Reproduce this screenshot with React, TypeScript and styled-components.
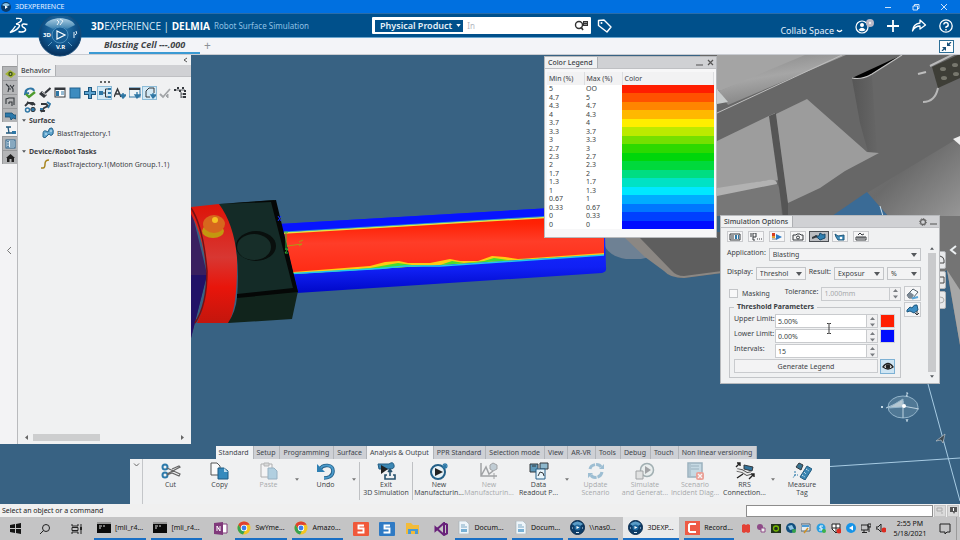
import React from "react";
import styled, { createGlobalStyle, css } from "styled-components";

const GlobalStyle = createGlobalStyle`
  *, *::before, *::after { box-sizing: border-box; }
  html, body { margin: 0; padding: 0; }
  body { font-family: "Noto Sans", "Open Sans", sans-serif; font-size: 7px; line-height: 9px; color: #3b3f45; }
  button, input, select { font: inherit; color: inherit; margin: 0; padding: 0; }
  button { background: none; border: 0; display: inline-flex; align-items: center; justify-content: center; }
  svg { display: block; flex: none; }
`;

const Shell = styled.div`
  min-height: 100vh;
  display: flex;
  flex-direction: column;
  overflow: hidden;
`;

const TitleBar = styled.header`
  height: 14px;
  display: flex;
  align-items: center;
  gap: 4px;
  padding: 0 12px 0 1px;
  background: #0070e0;
  color: #e8f2ff;
  border-bottom: 1px solid #2a6ca8;
`;

const WindowButtons = styled.div`
  margin-left: auto;
  display: flex;
  gap: 20px;
`;

const Header = styled.div`
  height: 23px;
  display: grid;
  grid-template-columns: 372fr 588fr;
  background: #00508b;
  color: #fff;
`;

const Brand = styled.div`
  display: flex;
  align-items: center;
  padding-left: 9px;
`;

const CompassSlot = styled.div`
  width: 44px;
  height: 20px;
  margin: 0 9px 0 10px;
  position: relative;
  z-index: 3;
  svg { position: absolute; left: 0; top: 0; }
`;

const BrandText = styled.h1`
  margin: 0;
  font: 400 10px/14px "Open Sans", sans-serif;
  color: #d8e8f6;
  white-space: nowrap;
  b { color: #fff; }
`;

const AppName = styled.span`
  margin-left: 4px;
  font-size: 8px;
  line-height: 14px;
  color: #8fc0e4;
  white-space: nowrap;
`;

const HeaderRight = styled.div`
  display: flex;
  align-items: center;
  padding-right: 7px;
`;

const SearchBox = styled.form`
  width: 219px;
  height: 17px;
  padding: 3px;
  display: flex;
  align-items: center;
  gap: 4px;
  background: #fff;
  border-radius: 1px;
  input { flex: 1; min-width: 0; border: 0; outline: 0; font-size: 8px; }
  input::placeholder { color: #b3b8bf; opacity: 1; }
`;

const ScopeButton = styled.button`
  && { height: 12px; padding: 0 2px 0 5px; gap: 4px; background: #00508b; color: #e6f0f8; font-weight: 600; font-size: 9px; line-height: 12px; white-space: nowrap; }
`;

const TagButton = styled.button`
  && { margin-left: 6px; }
`;

const HeaderActions = styled.div`
  margin-left: auto;
  display: flex;
  align-items: center;
  gap: 12px;
`;

const SpaceButton = styled.button`
  && { align-self: flex-end; margin-bottom: -3px; gap: 2px; font-size: 9px; line-height: 12px; color: #e2eefa; white-space: nowrap; }
`;

const TabStrip = styled.nav`
  height: 18px;
  display: flex;
  align-items: center;
  padding: 0 6px 0 89px;
  background: #f3f4f8;
  border-top: 1px solid #6aa6cf;
  border-bottom: 1px solid #c9ccd2;
`;

const DocumentTab = styled.button`
  && { align-self: stretch; width: 111px; border-bottom: 2px solid #3b9ad3; font: italic 700 9px/14px "Open Sans", sans-serif; color: #404347; }
`;

const AddTab = styled.button`
  && { width: 15px; font-size: 12px; line-height: 14px; color: #8b9096; }
`;

const ExitFull = styled.button`
  && { margin-left: auto; width: 15px; height: 13px; border: 1px solid #2d6f97; background: #fff; }
`;

const Workspace = styled.main`
  position: relative;
  flex: 1;
  min-height: 449px;
  overflow: hidden;
  background: #386283;
`;

const Scene = styled.svg`
  position: absolute;
  inset: 0;
  width: 100%;
  height: 100%;
`;

const LeftDock = styled.aside`
  position: absolute;
  left: 0;
  top: 0;
  bottom: 60px;
  width: 191px;
  display: flex;
  background: #f0f1f2;
`;

const Gutter = styled.div`
  width: 18px;
  padding-top: 11px;
  display: flex;
  flex-direction: column;
  align-items: flex-end;
  background: #f3f3f5;
  border-right: 1px solid #b9babd;
`;

const GutterButton = styled.button<{ $active?: boolean }>`
  && { width: 15px; height: 14px; background: ${(p) => (p.$active ? "#f5f5f6" : "#b4b5b7")}; border: 1px solid ${(p) => (p.$active ? "#f5f5f6" : "#98999b")}; border-right: 0; border-bottom: 0; }
`;

const DockHandle = styled.button`
  && { margin-top: 79px; width: 17px; height: 14px; }
`;

const DockBody = styled.div`
  flex: 1;
  min-width: 0;
  display: flex;
  flex-direction: column;
`;

const CollapseRow = styled.div`
  height: 10px;
  display: flex;
  justify-content: flex-end;
  padding-right: 3px;
`;

const WindowBar = styled.div`
  height: 12px;
  display: flex;
  align-items: center;
  background: #d0d1d4;
  border-bottom: 1px solid #bfc0c3;
`;

const WindowTab = styled.h2`
  margin: 0 auto 0 0;
  align-self: stretch;
  display: flex;
  align-items: center;
  padding: 0 4px 0 3px;
  background: #f0f1f2;
  border-right: 1px solid #aeb0b3;
  font-size: 7px;
  font-weight: 500;
  white-space: nowrap;
`;

const WindowTool = styled.button`
  && { width: 11px; height: 11px; }
`;

const Dots = styled.div`
  height: 6px;
  display: flex;
  align-items: flex-end;
  justify-content: center;
  gap: 2px;
  margin-bottom: 3px;
  span { width: 2px; height: 2px; background: #333; border-radius: 1px; }
`;

const IconGrid = styled.div`
  display: grid;
  grid-template-columns: repeat(11, 15px);
  grid-auto-rows: 14px;
  padding: 0 4px;
`;

const IconCell = styled.button<{ $on?: boolean }>`
  && {
    ${(p) => p.$on && css`background: #d3e9f5; border: 1px solid #8dbcd8;`}
  }
`;

const Tree = styled.div`
  padding: 0 4px;
  flex: 1;
`;

const TreeGroup = styled.h3`
  margin: 0;
  height: 13px;
  display: flex;
  align-items: center;
  gap: 3px;
  font-size: 7px;
  font-weight: 700;
  color: #3f4246;
`;

const TreeItem = styled.div<{ $inset: number }>`
  height: 12px;
  margin-bottom: 6px;
  padding-left: ${(p) => p.$inset}px;
  display: flex;
  align-items: center;
  gap: 3px;
  white-space: nowrap;
`;

const HorizontalScroll = styled.div`
  height: 13px;
  padding: 0 6px 0 7px;
  display: flex;
  align-items: center;
  gap: 4px;
  span { width: 67px; height: 7px; background: #cdcecf; margin-right: auto; }
`;

const Floating = styled.section<{ $right: number; $top: number; $width: number }>`
  position: absolute;
  right: ${(p) => p.$right}px;
  top: ${(p) => p.$top}px;
  width: ${(p) => p.$width}px;
  background: #f0f1f2;
  border: 1px solid #b7b9bc;
`;

const LegendBody = styled.div`
  padding: 3px 2px 8px;
  background: #f7f7f8;
`;

const LegendTable = styled.table`
  width: 100%;
  height: 157px;
  table-layout: fixed;
  border-collapse: collapse;
  background: #fff;
  th { height: 13px; padding: 0 2px; text-align: left; font-weight: 400; background: #f2f2f3; border-right: 1px solid #dcdde0; line-height: 10px; }
  td { padding: 0 2px; font-size: 7px; line-height: 8px; }
  td:nth-child(3) { padding: 0; }
`;

const ColorCell = styled.td<{ $color: string }>`
  background: ${(p) => p.$color};
`;

const SimBody = styled.div`
  display: flex;
  padding: 3px 2px 5px 6px;
`;

const SimForm = styled.form`
  flex: 1;
  min-width: 0;
  display: flex;
  flex-direction: column;
`;

const ModeBar = styled.div`
  display: flex;
  gap: 5px;
  height: 12px;
  margin-bottom: 5px;
`;

const ModeButton = styled.button<{ $on?: boolean }>`
  && { width: ${(p) => (p.$on ? 20 : 16)}px; margin: ${(p) => (p.$on ? "0 -2px" : "0")}; height: 11px; border: 1px solid ${(p) => (p.$on ? "#4c4f54" : "#c9cacd")}; background: ${(p) => (p.$on ? "#bcbec2" : "#f6f6f7")}; }
`;

const FieldRow = styled.div<{ $gap?: number }>`
  display: flex;
  align-items: center;
  gap: 3px;
  margin-bottom: ${(p) => p.$gap || 0}px;
  label { white-space: nowrap; margin-bottom: 4px; }
`;

const SelectWrap = styled.span<{ $w?: number }>`
  position: relative;
  ${(p) => (p.$w ? `width: ${p.$w}px;` : "flex: 1;")}
  select {
    appearance: none;
    width: 100%;
    height: 13px;
    padding: 0 0 0 3px;
    background: #f3f3f4;
    border: 1px solid #c3c5c8;
    border-radius: 0;
    display: block;
  }
  svg { position: absolute; right: 4px; top: 5px; pointer-events: none; }
`;

const CheckLabel = styled.label`
  && { display: flex; align-items: center; gap: 4px; margin: 0 12px 0 2px; }
  input { appearance: none; width: 9px; height: 9px; border: 1px solid #c3c5c8; background: #f8f8f9; }
`;

const SpinField = styled.span<{ $off?: boolean }>`
  flex: 1;
  min-width: 0;
  height: 14px;
  display: flex;
  border: 1px solid #c9cbce;
  background: ${(p) => (p.$off ? "#f1f1f2" : "#fff")};
  color: ${(p) => (p.$off ? "#a6a8ab" : "#3b3f45")};
  input { flex: 1; min-width: 0; border: 0; padding-left: 2px; background: transparent; outline: 0; }
`;

const Spinner = styled.span`
  width: 11px;
  display: flex;
  align-items: center;
  justify-content: center;
  background: #f1f1f2;
  border-left: 1px solid #c9cbce;
`;

const SquareButton = styled.button<{ $blue?: boolean }>`
  && { width: ${(p) => (p.$blue ? 15 : 17)}px; height: 15px; border: 1px solid ${(p) => (p.$blue ? "#7db1d4" : "#c9cbce")}; background: ${(p) => (p.$blue ? "#cfe5f3" : "#f5f5f6")}; }
`;

const ThresholdRow = styled.div`
  display: flex;
  align-items: flex-start;
  justify-content: space-between;
  padding: 1px 0 0 2px;
`;

const Threshold = styled.fieldset`
  width: 172px;
  margin: 0;
  padding: 2px 5px 3px 4px;
  border: 1px solid #c3c5c8;
  legend { padding: 0 3px; font-weight: 700; line-height: 10px; }
`;

const LimitRow = styled.div`
  display: grid;
  grid-template-columns: 39px 103px 15px;
  column-gap: 2px;
  height: 15px;
  align-items: start;
  white-space: nowrap;
  label { line-height: 9px; }
`;

const Swatch = styled.button<{ $color: string }>`
  && { width: 15px; height: 14px; background: ${(p) => p.$color}; border: 1px solid #d4d5d8; }
`;

const GenerateRow = styled.div`
  display: grid;
  grid-template-columns: 1fr 15px;
  column-gap: 2px;
`;

const Generate = styled.button`
  && { height: 14px; border: 1px solid #c9cbce; background: #f3f3f4; }
`;

const VerticalScroll = styled.div`
  width: 10px;
  margin: 16px 0 0 6px;
  display: flex;
  flex-direction: column;
  align-items: center;
  gap: 3px;
  span { flex: 1; width: 8px; background: #c9cacc; }
`;

const SideTools = styled.div`
  position: absolute;
  right: 14px;
  top: 196px;
  display: flex;
  flex-direction: column;
  gap: 2px;
`;

const SideTool = styled.button`
  && { width: 7px; height: 18px; background: #e8e9eb; border: 1px solid #b3b5b8; border-radius: 0 2px 2px 0; }
`;

const ActionBar = styled.section`
  position: absolute;
  left: 130px;
  right: 130px;
  bottom: 0;
  display: flex;
  flex-direction: column;
  align-items: center;
`;

const ActionTabs = styled.div`
  display: flex;
  height: 13px;
  background: #ced0d5;
  margin-left: 13px;
`;

const ActionTab = styled.button<{ $on?: boolean }>`
  && { padding: 0 4px 0 3px; border-right: 1px solid #b1b4b9; background: ${(p) => (p.$on ? "#f1f2f4" : "#ced0d5")}; color: #41454b; white-space: nowrap; }
`;

const ActionBody = styled.div`
  align-self: stretch;
  height: 45px;
  display: flex;
  background: #f0f1f2;
`;

const Expand = styled.button`
  && { width: 13px; align-items: flex-start; padding-top: 4px; border-right: 1px solid #c4c6c9; }
`;

const Commands = styled.div`
  flex: 1;
  display: flex;
  justify-content: center;
  align-items: flex-start;
  padding-top: 3px;
`;

const Command = styled.button<{ $off?: boolean; $wide?: boolean }>`
  && { width: ${(p) => (p.$wide ? 50 : 49)}px; flex-direction: column; font-family: "Open Sans", sans-serif; line-height: 8px; gap: 1px; white-space: nowrap; opacity: ${(p) => (p.$off ? 0.42 : 1)}; }
`;

const More = styled.button`
  && { width: 8px; height: 34px; }
`;

const Rule = styled.i`
  width: 1px;
  height: 38px;
  margin: 0 1px;
  background: #bfc1c4;
`;

const PointerMark = styled.svg`
  position: absolute;
  right: 128px;
  top: 268px;
  pointer-events: none;
`;

const StatusBar = styled.footer`
  height: 13px;
  display: flex;
  align-items: center;
  gap: 1px;
  padding: 0 1px 0 2px;
  background: #f0f0f0;
  color: #222;
  input { margin-left: auto; width: 187px; height: 12px; border: 1px solid #8d8d8d; background: #fff; }
`;

const StatusTool = styled.button`
  && { width: 12px; height: 12px; background: #dadada; border: 1px solid #c4c4c4; }
`;

const Taskbar = styled.footer`
  height: 23px;
  display: flex;
  align-items: stretch;
  background: #c4c4c5;
  color: #111;
`;

const TaskButton = styled.button<{ $w: number; $state?: "open" | "front" }>`
  && {
    width: ${(p) => p.$w}px;
    height: 23px;
    gap: 4px;
    white-space: nowrap;
    background: ${(p) => (p.$state === "front" ? "#e9eaeb" : "transparent")};
    border-bottom: ${(p) => (p.$state ? "2px solid #1a6fc4" : "0 solid transparent")};
    margin-right: ${(p) => (p.$state ? 5 : 0)}px;
  }
`;

const Tray = styled.div`
  margin-left: auto;
  display: flex;
  align-items: center;
  gap: 5px;
`;

const TrayIcon = styled.button`
  && { width: 10px; height: 14px; }
`;

const Clock = styled.time`
  width: 38px;
  text-align: center;
  line-height: 10px;
`;

const Notice = styled.button`
  && { width: 23px; height: 23px; border-right: 1px solid #9b9b9b; margin-right: 3px; }
`;

type IconProps = { w?: number; h?: number; box?: string; children: React.ReactNode };
const Icon = ({ w = 12, h = 12, box, children }: IconProps) => (
  <svg width={w} height={h} viewBox={box || `0 0 ${w} ${h}`} fill="none" aria-hidden="true">{children}</svg>
);

const Caret = ({ up, small }: { up?: boolean; small?: boolean }) => (
  <Icon w={small ? 4 : 6} h={small ? 3 : 4} box="0 0 6 4"><path d={up ? "M0 4L3 0L6 4Z" : "M0 0H6L3 4Z"} fill="#55585c" /></Icon>
);

const Spin = () => (
  <Spinner>
    <Icon w={5} h={11} box="0 0 5 11"><path d="M0 4L2.500 1L5 4ZM0 7.500H5L2.500 10.500Z" fill="#797c80" /></Icon>
  </Spinner>
);

const Compass = ({ size = 44 }: { size?: number }) => (
  <svg width={size} height={size} viewBox="0 -1 44 44" fill="none" aria-hidden="true">
    <defs>
      <radialGradient id="ball" cx=".5" cy=".35" r=".7"><stop offset="0" stopColor="#2f7db3" /><stop offset=".6" stopColor="#0d4f86" /><stop offset="1" stopColor="#05284f" /></radialGradient>
      <linearGradient id="cap" x1="0" y1="0" x2="0" y2="1"><stop offset="0" stopColor="#a9cde3" /><stop offset="1" stopColor="#3b80ae" /></linearGradient>
    </defs>
    <circle cx="22" cy="18" r="21" fill="url(#ball)" stroke="#164d7c" />
    <path d="M7 8C11-1 33-1 37 8L29 12Q22 7 15 12Z" fill="url(#cap)" />
    <path d="M10 29L14 25M34 29L30 25" stroke="#5d9cc4" />
    <circle cx="22" cy="18" r="8" fill="#165c93" stroke="#5a9cc8" strokeWidth=".8" />
    <path d="M19 14L27 18L19 22Z" stroke="#fff" strokeWidth="1.200" />
    <path d="M19 3l2 2l-2 3M22 2l3 2l-3 4M36 15v6M38 14q2 3-1 4" stroke="#eaf4fb" strokeWidth="1" />
    <text x="5" y="20" fontSize="6" fontWeight="700" fill="#fff">3D</text>
    <text x="18" y="32" fontSize="6" fontWeight="700" fill="#fff">V.R</text>
  </svg>
);

const Glyph = ({ name }: { name: string }) => {
  const b = "#2f77a5";
  const k = "#34383d";
  switch (name) {
    case "check":
      return <Icon><path d="M2 6C1 1 9 0 10 4M2 3L1 7L5 6" stroke={b} strokeWidth="2" /><path d="M2 7L5 10L11 5" stroke="#4d9b2d" strokeWidth="2.400" /></Icon>;
    case "brush":
      return <Icon><path d="M11.500 1L6 6" stroke={k} strokeWidth="2" /><path d="M3 4L8 8L5 11L0 7Z" fill={k} /><path d="M3 5L7 8" stroke="#d8d8d8" /></Icon>;
    case "list":
      return <Icon><rect x="1" y="1" width="10" height="9" fill="#fff" stroke={k} /><path d="M1 2H11" stroke={k} strokeWidth="2" /><path d="M2 4h3v5H2z" fill={b} /><path d="M7 5H10M7 7H10" stroke={b} /></Icon>;
    case "square":
      return <Icon><rect x="1" y="1" width="10" height="10" fill="#3d8cc0" stroke="#20638f" /></Icon>;
    case "plus":
      return <Icon><path d="M6 0V12M0 6H12" stroke="#1c567d" strokeWidth="4" /><path d="M6 1V11M1 6H11" stroke="#5ba2cf" strokeWidth="2" /></Icon>;
    case "tree":
      return <Icon><path d="M0 4h4v4H0z" fill={b} /><path d="M4 6H6M9 2H6.500V10H9" stroke={k} /><path d="M9 1h3v2H9zM9 5h3v2H9zM9 9h3v2H9z" fill={b} /></Icon>;
    case "text":
      return <Icon><path d="M0 10L3.500 2L7 10M2 7H6" stroke={k} strokeWidth="1.500" /><path d="M9 6v3M7 8l2 3l3-3z" stroke={b} strokeWidth="1.500" fill={b} /></Icon>;
    case "winDown":
      return <Icon><rect x="0" y="1" width="11" height="9" fill="#eef3f6" stroke={b} /><path d="M0 2H11" stroke={k} strokeWidth="2" /><path d="M8 5v4M6 8l2 3l3-3z" stroke={b} strokeWidth="1.300" fill={b} /></Icon>;
    case "pageDown":
      return <Icon><path d="M2 10V4L5 1H10V6M2 10H6" stroke={k} /><path d="M9 6v3M7 8l2 3l3-3z" stroke={b} strokeWidth="1.300" fill={b} /></Icon>;
    case "tickGrey":
      return <Icon><path d="M1 7L4 10L11 2" stroke="#a2a5a8" strokeWidth="1.800" /><path d="M7 9L9 7V11Z" fill="#a2a5a8" stroke="#a2a5a8" /></Icon>;
    case "nodes":
      return <Icon><path d="M1 3h10M7 5v6M7 7h4M7 10h4" stroke={k} strokeWidth=".8" /><path d="M0 2h2v2H0zM3 0h2v2H3zM5 3h2v2H5zM8 0h2v2H8zM10 3h2v2h-2zM9 6h3v2H9zM9 9h3v2H9z" fill={k} /></Icon>;
    case "gears":
      return <Icon><path d="M1 5L4 2H9L11 4M3 1L9 4" stroke={k} strokeWidth="1.800" /><circle cx="3.500" cy="9" r="2" stroke={b} strokeWidth="1.500" /><circle cx="9" cy="8.500" r="2.200" fill={b} stroke={k} /></Icon>;
    case "robotGo":
      return <Icon><path d="M2 3H7L9 5L5 7L2 11M1 9L6 10" stroke={k} strokeWidth="1.800" /><path d="M8 1L11 3L9 7M1 8H4" stroke={b} strokeWidth="1.800" /></Icon>;
    case "surface":
      return <Icon><path d="M1 7Q1 3 4 4L6 5Q7 0 10 1Q12 3 11 7Q9 10 7 7L5 9Q3 12 1 10Z" fill="#63a8d0" stroke="#27658e" /><path d="M3 7L5 7M8 4L10 4" stroke="#d8edf8" /></Icon>;
    case "curve":
      return <Icon w={10} h={10}><path d="M1 9H3Q5 9 5 5T9 1" stroke="#a8851e" strokeWidth="1.500" /></Icon>;
    case "robot":
      return <Icon w={11} h={10}><path d="M1 1L4 4L3 9M5 2L8 6V9M9 2L7 5M3 6H6" stroke={k} strokeWidth="1.100" /></Icon>;
    case "device":
      return <Icon w={11} h={10}><path d="M0 2H7L9 4H11V8L8 7L6 9L5 6H0Z" fill="#2b78aa" stroke="#174b70" strokeWidth=".8" /></Icon>;
    case "motion":
      return <Icon w={11} h={10}><path d="M1 2H6M3 2L4 8M1 8H8" stroke="#20587e" strokeWidth="1.300" /><path d="M7 6h4v3H7z" fill={b} /></Icon>;
    case "eyeGreen":
      return <Icon w={11} h={10}><path d="M0 5L5 1L11 5L6 9Z" fill="#a3b432" /><circle cx="5.500" cy="5" r="2.200" fill="#3f541c" /><circle cx="5.500" cy="5" r=".8" fill="#dde7a6" /></Icon>;
    case "frame":
      return <Icon w={11} h={10}><path d="M1 7V2L4 1H9V8M4 5h3v4M4 5v2" stroke={k} strokeWidth="1.100" /></Icon>;
    case "tableBlue":
      return <Icon w={11} h={10}><rect x="1" y="1" width="9" height="8" fill="#eaf3f8" stroke="#245f88" /><path d="M5 3H9M5 5H9M5 7H9" stroke="#245f88" /><path d="M3 2V9" stroke="#245f88" strokeDasharray="1.500 .7" strokeWidth="1.500" /></Icon>;
    case "home":
      return <Icon w={11} h={10}><path d="M1 5L5.500 1L10 5H9V9H6.500V6H4.500V9H2V5Z" fill="#222" /></Icon>;
    case "monitor":
      return <Icon w={12} h={8}><path d="M1 1H11V7H1Z" stroke={k} /><path d="M2 3h3M2 5h3" stroke={k} /><path d="M6 2h2v4H6zM9 2h1v4H9z" fill={b} /></Icon>;
    case "points":
      return <Icon w={12} h={8}><path d="M1 0V4M3 0H6V4H3ZM3 4V7H5M7 6H8M9 6H10M11 6H12" stroke={k} /></Icon>;
    case "play":
      return <Icon w={12} h={8}><path d="M1 0h3v3H1z" fill="#d63d20" /><path d="M1 3h3v2H1z" fill="#e4a12f" /><path d="M1 6h4" stroke="#777" /><path d="M5 1L11 4L5 7Z" fill="#2979c5" /></Icon>;
    case "camera":
      return <Icon w={12} h={8}><path d="M1 2H4L5 1H8L9 2H11V7H1Z" stroke={k} /><circle cx="6" cy="4.500" r="1.500" stroke={k} /></Icon>;
    case "paint":
      return <Icon w={14} h={9}><path d="M3 4L7 4L8 1L11 3L13 2V6L8 8L6 6Z" fill="#2f7fb0" stroke="#194a6d" /><path d="M0 6L5 4" stroke={k} strokeWidth="2" /></Icon>;
    case "film":
      return <Icon w={12} h={8}><path d="M1 1L4 3L10 2V7H4L2 4Z" fill="#4590bd" stroke="#1f587c" /><circle cx="7" cy="5" r="1.300" fill="#fff" /></Icon>;
    case "ruler":
      return <Icon w={12} h={8}><path d="M1 7V4H11V7ZM3 6V4M5 6V4M7 6V4M9 6V4M3 2L5 0L7 2L9 1" stroke={k} /></Icon>;
    case "eraser":
      return <Icon w={13} h={12}><path d="M1 7L7 1L12 4L7 10H3Z" fill="#f5fafd" stroke="#55606a" /><path d="M1 7L4 4L8 7L6 10H3Z" fill="#7b8894" /><path d="M6 10.500L12 9" stroke="#5aa6d8" strokeWidth="2" /></Icon>;
    case "paintInfo":
      return <Icon w={13} h={12}><path d="M1 6L4 3L6 4Q8 0 11 1L12 6L8 9L4 7L1 8Z" fill="#3d8ec4" stroke="#1c567d" /><path d="M11 7V11M9 9L11 11L13 9" stroke={k} /></Icon>;
    case "eye":
      return <Icon w={12} h={9}><path d="M1 5Q6-2 11 5Q6 9 1 5Z" fill="#fff" stroke="#222" strokeWidth="1.300" /><circle cx="6" cy="4.500" r="2.300" fill="#222" /></Icon>;
    default:
      return null;
  }
};

const BigGlyph = ({ name }: { name: string }) => {
  const b = "#2d7aaa";
  const k = "#34383d";
  const box = { w: 20, h: 18 };
  switch (name) {
    case "cut":
      return <Icon {...box}><circle cx="4" cy="5" r="2.500" stroke={b} strokeWidth="2" /><circle cx="4" cy="13" r="2.500" stroke={b} strokeWidth="2" /><path d="M6 6L19 12L18 14L11 11L6 13M6 12L19 5L18 4L11 7" stroke="#666" strokeWidth="1.200" /></Icon>;
    case "copy":
      return <Icon {...box}><path d="M1 1H7L10 4V13H1Z" fill="#fafafa" stroke="#555" /><path d="M8 6H14L18 9V17H8Z" fill="#358abd" stroke="#1d5a83" /><path d="M14 6V10H18Z" fill="#bfdcec" /></Icon>;
    case "paste":
      return <Icon {...box}><path d="M2 2H13V15H2Z" fill="#fafafa" stroke="#555" /><path d="M5 1H10V4H5Z" fill="#bbb" stroke="#666" /><path d="M9 6H15L18 9V17H9Z" fill="#5da1c9" stroke="#1d5a83" /></Icon>;
    case "undo":
      return <Icon {...box}><path d="M4 7C7 2 17 2 17 9C17 15 11 16 8 16" stroke="#245f88" strokeWidth="3.600" /><path d="M4 7C7 2 17 2 17 9C17 15 11 16 8 16" stroke="#4b9bcb" strokeWidth="1.800" /><path d="M1 2V10H9Z" fill="#2f80b3" /></Icon>;
    case "exit":
      return <Icon {...box}><path d="M2 2H13Q17-1 18 3T14 7H3Z" fill="#3c88b5" stroke="#245d83" /><path d="M5 3L12 7L5 12Z" fill="#222" /><path d="M11 13H9V17H19V13H17M14 14V8M12 10L14 7.500L16 10" stroke="#27516d" strokeWidth="1.600" /></Icon>;
    case "newPlay":
      return <Icon {...box}><circle cx="9" cy="10" r="7" fill="#e9f3f8" stroke="#235f87" strokeWidth="2" /><path d="M6 6L14 10L6 14Z" fill="#222" /><path d="M16 1V7M13 4H19M14 2L18 6M18 2L14 6" stroke={b} strokeWidth="1.200" /></Icon>;
    case "graph":
      return <Icon {...box}><path d="M2 1V14H18M2 14L7 5L10 12L14 9" stroke={k} strokeWidth="1.500" /><path d="M11 3L14 1L18 3V7L14 9L11 7Z" fill="#7f9aab" stroke={k} /><path d="M15 11v6" stroke={k} /></Icon>;
    case "data":
      return <Icon {...box}><path d="M1 2h8v8H1z" fill="#5f98b8" stroke={k} /><path d="M11 1h8v6h-8z" fill="#8db7cc" stroke={k} /><path d="M7 7h9v10H7z" fill="#e8f4fa" stroke="#245f88" /><path d="M9 14l2-4l3 1l1 3M3 4h4" stroke={k} /></Icon>;
    case "update":
      return <Icon {...box}><path d="M4 7C5 2 13 1 15 5M16 10C15 16 7 17 5 13" stroke={b} strokeWidth="3" strokeDasharray="7 1" /><path d="M13 7H18V2ZM7 11H2V16Z" fill={b} /></Icon>;
    case "simulate":
      return <Icon {...box}><circle cx="12" cy="8" r="6.500" fill="#e1ebe9" stroke="#35565c" strokeWidth="1.500" /><path d="M10 4L16 8L10 12Z" fill={k} /><path d="M1 9h7v8H1z" fill="#ccc" stroke={k} /></Icon>;
    case "scenario":
      return <Icon {...box}><path d="M3 1H17V15H3Z" fill="#8cb9cf" stroke="#285c79" strokeWidth="1.500" /><path d="M6 4H14M6 7H14M5 2V14" stroke="#285c79" /><rect x="11" y="10" width="8" height="8" rx="2" fill="#e3341d" /><path d="M13 12L17 16M17 12L13 16" stroke="#fff" strokeWidth="1.300" /></Icon>;
    case "rrs":
      return <Icon {...box}><path d="M2 8L7 9L12 12L16 11" stroke="#555" strokeWidth="3.600" /><path d="M2 8L7 9L12 12L16 11" stroke="#e8e8e8" strokeWidth="1.800" /><path d="M9 3L18 5L17 9L9 7Z" fill="#31729a" stroke={k} /><path d="M1 5L5 1M2 1H5V4M14 17L19 12M19 15V12H16M2 16L8 12" stroke="#222" strokeWidth="1.400" /></Icon>;
    case "measure":
      return <Icon {...box}><path d="M15 4L20 7L13 18L8 15Z" fill="#3985b2" stroke="#235c80" /><path d="M14 7L17 9M12 10L14 12M10 13L13 15" stroke="#fff" strokeDasharray="1 1" /><path d="M7 1L11 3L9 8L4 5Z" fill="#397491" stroke={k} /><path d="M3 9V13H6M3 13L1 16" stroke={b} strokeDasharray="2 1" /></Icon>;
    default:
      return null;
  }
};

const CellScene = () => (
  <Scene viewBox="0 55 960 449" preserveAspectRatio="xMidYMid slice" role="img" aria-label="Robot cell view">
    <defs>
      <linearGradient id="strip" x1="0" y1="0" x2="0.05" y2="1"><stop offset="0" stopColor="#ff1a00" /><stop offset=".2" stopColor="#ff2205" /><stop offset=".5" stopColor="#ff3d28" /><stop offset="1" stopColor="#ff2b14" /></linearGradient>
      <linearGradient id="under" x1="0" y1="0" x2="0.05" y2="1"><stop offset="0.5" stopColor="#1428ff" /><stop offset=".75" stopColor="#1020f4" /><stop offset="1" stopColor="#0008c8" /></linearGradient>
      <linearGradient id="ring" x1="0" y1="0" x2="0" y2="1"><stop offset="0" stopColor="#dd1408" /><stop offset=".45" stopColor="#d83732" /><stop offset=".7" stopColor="#e8150b" /><stop offset="1" stopColor="#c3160d" /></linearGradient>
      <linearGradient id="hullLow" x1="0" y1="0" x2="1" y2="1"><stop offset="0" stopColor="#777" /><stop offset=".4" stopColor="#6b6b6b" /><stop offset="1" stopColor="#989898" /></linearGradient>
      <linearGradient id="tube" x1="0" y1="0" x2=".4" y2="1"><stop offset="0" stopColor="#858585" /><stop offset=".5" stopColor="#a6a6a6" /><stop offset="1" stopColor="#808080" /></linearGradient>
      <linearGradient id="pillar" x1="0" y1="0" x2="1" y2="0"><stop offset="0" stopColor="#565656" /><stop offset="1" stopColor="#666" /></linearGradient>
    </defs>
    <rect y="55" width="960" height="449" fill="#386283" />

    <path d="M604 230L630 236L650 257L641 259H626Q608 256 604 244Z" fill="#6e8194" />
    <path d="M622 232H722V273L684 278Q674 278 670 273L648 256Z" fill="#5e5e5e" />
    <path d="M625 238L645 257L664 271Q670 278 684 278L722 273V271L684 276Q676 276 671 270L640 238Z" fill="#8b8783" />

    <path d="M700 55H960V345L947 270H934V216H717Z" fill="#676767" />
    <path d="M717 55H812L720 91L717 90Z" fill="#a4a4a4" />
    <path d="M719 91L805 55H846L728 105Z" fill="url(#tube)" />
    <path d="M717 113L842 55" stroke="#bdbdbd" strokeWidth="1" />
    <path d="M717 89L728 102L717 104Z" fill="#c8cccc" />
    <path d="M717 141L775 113L779 180L717 192Z" fill="#9d9d9d" />
    <path d="M717 190L768 180Q777 180 780 190L782 216H717Z" fill="#777" />
    <path d="M717 188L768 180Q777 179 777 184L717 196Z" fill="#b2b2b2" />
    <path d="M769 116L776 113L788 203V216H783Z" fill="#555" />
    <path d="M776 114L807 99L867 152L879 153L845 171L820 188L788 203Z" fill="#9c9c9c" />
    <path d="M852 79L872 76L877 152H868L860 123Z" fill="url(#pillar)" />
    <path d="M852 78Q862 80 872 74L902 55" stroke="#c1c1c1" strokeWidth="1.200" />
    <path d="M960 137L867 193L892 220H960Z" fill="url(#hullLow)" />
    <path d="M832 216L867 192L888 216Z" fill="#3a6b96" />
    <path d="M953 139L960 136V145Z" fill="#eee" />
    <path d="M880 206L883 216" stroke="#cbdfeb" />
    <path d="M932 67L960 54V78L938 88Z" fill="#3e3e37" />
    <path d="M930 66L960 51" stroke="#b9b9b9" strokeWidth="2" />
    <g fill="#77776d"><ellipse cx="943" cy="69" rx="3" ry="2" /><ellipse cx="955" cy="65" rx="3" ry="2" /><ellipse cx="944" cy="78" rx="3" ry="2" /><ellipse cx="956" cy="74" rx="3" ry="2" /></g>
    <path d="M918 74L926 72" stroke="#bebebe" strokeWidth="2" />
    <path d="M923 102Q935 102 938 88" stroke="#b8b8b8" strokeWidth="2" fill="none" />
    <path d="M938 216H960V345L947 270L938 276Z" fill="#747474" />
    <path d="M947 270L960 290V345Z" fill="#a7a7a7" />

    <path d="M279 224L604 205L606 267Q607 272 602 273L297 293Z" fill="url(#under)" />
    <path d="M279 224L604 205V214L284 233Z" fill="#0714ff" />
    <path d="M284 233L604 214V254L293 273Z" fill="url(#strip)" />
    <path d="M284 233L604 214" stroke="#e7e344" strokeWidth="1.500" />
    <path d="M284 232L604 213" stroke="#3ad7c2" strokeWidth="0.600" />
    <path d="M370 266L385 262L399 261L408 263L430 263L450 259L460 261L478 261L492 256L505 257L518 259L604 253V255L293 274V272Z" fill="#ffcb12" />
    <path d="M370 268L398 263L412 265L440 265L452 261L464 263L484 261L494 258L508 260L520 260L604 254.500L293 274Z" fill="#45dd32" />
    <path d="M293 273.500L380 268.500L405 266L440 266L500 262L604 255" stroke="#20c8ec" strokeWidth="1.500" fill="none" />

    <path d="M191 208L207 274L191 338Z" fill="#39205f" />
    <path d="M191 275H207L191 338Z" fill="#211267" />
    <path d="M191 207L219 204Q233 216 237 256Q238 303 229 323L197 323Q207 302 207 273Q203 236 191 214Z" fill="url(#ring)" />
    <path d="M191 208Q203 226 207 271Q207 305 195 323" stroke="#741015" fill="none" strokeWidth="1.500" />
    <path d="M219 204L274 200L298 292L237 298Q242 235 219 204Z" fill="#142b27" />
    <path d="M237 297L298 291L292 319L228 323Q236 311 237 297Z" fill="#11241c" />
    <path d="M219 204L276 200L298 292L237 298V294L293 288L271 202Z" fill="#050706" />
    <ellipse cx="256" cy="246" rx="20" ry="15" fill="#090f0d" />
    <ellipse cx="254" cy="247" rx="17" ry="13" fill="#172e29" />
    <ellipse cx="213" cy="231" rx="11" ry="7" fill="#c3970f" />
    <ellipse cx="214" cy="224" rx="11" ry="9" fill="#d7671d" />
    <circle cx="215" cy="220" r="3" fill="#f5bf22" />
    <path d="M287 246L302 244M299 242L303 240M299 246L302 244" stroke="#b09a12" />
    <path d="M284 232H288M285 249H288L285 253H288M286 233V250" stroke="#34b43c" fill="none" />
    <path d="M278 216L281 221M281 216L278 221" stroke="#1430ff" />

    <path d="M928 384L960 501M830 466.500L960 458" stroke="#a7cbe3" strokeWidth="1" />
    <path d="M936 441L945 434L943 443L941 440Z" fill="#3f4a52" stroke="#c6ced4" strokeWidth=".6" />
    <g stroke="#93b4ca" fill="none">
      <ellipse cx="903" cy="407" rx="15" ry="11" fill="#6087a2" fillOpacity=".6" />
      <path d="M886 408L903 401V406L919 409M903 406L903 418" stroke="#bdd2df" />
      <path d="M888 408L903 399V407Z" fill="#b5c7d2" />
    </g>
    <circle cx="904" cy="406" r="2" fill="#fff" />
    <path d="M906 393h2l-2 3h2M881 406l2 2M883 406l-2 2M906 419l1 2l1-2M907 421v1" stroke="#c2d7e4" fill="none" />
    <path d="M956 246L951 250L956 254" stroke="#ecf0f2" strokeWidth="2" fill="none" />
  </Scene>
);

const legend: [string, string, string][] = [
  ["5", "OO", "#ff1e00"], ["4.7", "5", "#ff5200"], ["4.3", "4.7", "#ff8500"], ["4", "4.3", "#ffb800"],
  ["3.7", "4", "#ffee00"], ["3.3", "3.7", "#bcea00"], ["3", "3.3", "#74e000"], ["2.7", "3", "#2cd900"],
  ["2.3", "2.7", "#00d60a"], ["2", "2.3", "#00d93c"], ["1.7", "2", "#00dd82"], ["1.3", "1.7", "#00e2c4"],
  ["1", "1.3", "#00e8ff"], ["0.67", "1", "#00adff"], ["0.33", "0.67", "#0077ff"], ["0", "0.33", "#0040ff"], ["0", "0", "#000cff"],
];

const panelTools = ["check", "brush", "list", "square", "plus", "tree", "text", "winDown", "pageDown", "tickGrey", "nodes", "gears", "robotGo"];
const gutterTools = ["eyeGreen", "robot", "frame", "device", "motion", "tableBlue", "home"];
const modes = ["monitor", "points", "play", "camera", "paint", "film", "ruler"];
const barTabs = ["Standard", "Setup", "Programming", "Surface", "Analysis & Output", "PPR Standard", "Selection mode", "View", "AR-VR", "Tools", "Debug", "Touch", "Non linear versioning"];

type CommandSpec = { icon: string; lines: string[]; off?: boolean; more?: boolean; rule?: boolean; wide?: boolean };
const commands: CommandSpec[] = [
  { icon: "cut", lines: ["Cut"] },
  { icon: "copy", lines: ["Copy"] },
  { icon: "paste", lines: ["Paste"], off: true, more: true },
  { icon: "undo", lines: ["Undo"], more: true, rule: true },
  { icon: "exit", lines: ["Exit", "3D Simulation"], rule: true, wide: true },
  { icon: "newPlay", lines: ["New", "Manufacturin..."], wide: true },
  { icon: "graph", lines: ["New", "Manufacturin..."], off: true, wide: true },
  { icon: "data", lines: ["Data", "Readout P..."], more: true },
  { icon: "update", lines: ["Update", "Scenario"], off: true },
  { icon: "simulate", lines: ["Simulate", "and Generat..."], off: true, wide: true },
  { icon: "scenario", lines: ["Scenario", "Incident Diag..."], off: true, wide: true },
  { icon: "rrs", lines: ["RRS", "Connection..."], more: true },
  { icon: "measure", lines: ["Measure", "Tag"], wide: true },
];

const TaskGlyph = ({ kind }: { kind: string }) => {
  switch (kind) {
    case "start":
      return <Icon w={11} h={11}><path d="M0 2L5 1V5H0ZM6 1L11 0V5H6ZM0 6H5V10L0 9ZM6 6H11V11L6 10Z" fill="#151515" /></Icon>;
    case "search":
      return <Icon w={12} h={12}><circle cx="7" cy="5" r="3.500" stroke="#222" /><path d="M4.500 7.500L1 11" stroke="#222" /></Icon>;
    case "view":
      return <Icon w={12} h={12}><path d="M1 1V3H7V1M1 11V9H7V11M1 4.500H7V7.500H1ZM10 1V11" stroke="#222" /><path d="M9 4h2v3H9z" fill="#222" /></Icon>;
    case "cmd":
      return <Icon w={14} h={11}><rect width="14" height="11" fill="#999" /><rect y="2" width="14" height="9" fill="#0a0a0a" /><path d="M2 4H5M6 4H8M2 6H4" stroke="#ddd" /></Icon>;
    case "note":
      return <Icon w={14} h={13}><path d="M6 2H13V11H6" fill="#fff" stroke="#80397b" /><path d="M0 1L9 0V13L0 12Z" fill="#80397b" /><path d="M3 9V4L6 9V4M11 3v7" stroke="#fff" /></Icon>;
    case "chrome":
      return <Icon w={14} h={14}><circle cx="7" cy="7" r="6.500" fill="#f4c522" /><path d="M1.400 3.700A6.500 6.500 0 0 1 12.600 3.700L7 4L4.500 8.500Z" fill="#df4130" /><path d="M1.400 3.700L4.500 8.500L8 9.700L6 13.400A6.500 6.500 0 0 1 1.400 3.700Z" fill="#36a350" /><circle cx="7" cy="7" r="3.200" fill="#fff" /><circle cx="7" cy="7" r="2.400" fill="#3b7ded" /></Icon>;
    case "snagRed":
    case "snagBlue":
      return <Icon w={16} h={14}><rect width="16" height="14" rx="1" fill={kind === "snagRed" ? "#f0583a" : "#2f7ac4"} /><path d="M11 3.500H5.500V6.500H10.500V10.500H4.500" stroke="#fff" strokeWidth="1.900" /></Icon>;
    case "folder":
      return <Icon w={14} h={13}><path d="M0 1H5L7 3H13V12H0Z" fill="#f2bb3a" /><path d="M2 7H12V12H9V9H5V12H2Z" fill="#4a9ad4" /></Icon>;
    case "vs":
      return <Icon w={14} h={14}><path d="M10 1L13 2.500V11.500L10 13L1.500 5.500V8.500L10 1V13" stroke="#68217a" strokeWidth="2" /></Icon>;
    case "doc":
      return <Icon w={12} h={13}><path d="M1 0H8L11 3V13H1Z" fill="#eef5fa" stroke="#a2aeb6" strokeWidth=".6" /><path d="M3 4H7M3 6H9" stroke="#7fa9c4" /><path d="M3 8h6v3H3z" fill="#78b0d5" /></Icon>;
    case "compass":
      return <Icon w={15} h={15}><circle cx="7.500" cy="7.500" r="7" fill="#0e3d68" stroke="#092a4c" /><path d="M2 4Q7.500-1 13 4L10 6H5Z" fill="#5b9cc6" /><circle cx="7.500" cy="7.500" r="3" fill="#1d669c" /><path d="M6.500 6L9.500 7.500L6.500 9Z" fill="#fff" /><path d="M2 8H3M12 8H13M6 12.500H9" stroke="#d5e6f2" /></Icon>;
    case "camtasia":
      return <Icon w={15} h={14}><rect width="15" height="14" fill="#ee5a45" /><path d="M11 3H5L4 4V10L5 11H11" stroke="#fff" strokeWidth="2" /></Icon>;
    default:
      return null;
  }
};

type Task = { kind: string; label?: string; w: number; state?: "open" | "front" };
const tasks: Task[] = [
  { kind: "start", w: 30 }, { kind: "search", w: 30 }, { kind: "view", w: 34 },
  { kind: "cmd", label: "[mli_r4...", w: 52, state: "open" },
  { kind: "cmd", label: "[mli_r4...", w: 51, state: "open" },
  { kind: "note", w: 28 },
  { kind: "chrome", label: "SwYme...", w: 52, state: "open" },
  { kind: "chrome", label: "Amazo...", w: 51, state: "open" },
  { kind: "snagRed", w: 26 }, { kind: "snagBlue", w: 26 }, { kind: "folder", w: 26 }, { kind: "vs", w: 29 },
  { kind: "doc", label: "Docum...", w: 52, state: "open" },
  { kind: "doc", label: "Docum...", w: 51, state: "open" },
  { kind: "compass", label: "\\\\nas0...", w: 50, state: "open" },
  { kind: "compass", label: "3DEXP...", w: 56, state: "front" },
  { kind: "camtasia", label: "Record...", w: 50, state: "open" },
];

const trayIcons: [string, React.ReactNode][] = [
  ["Recorder", <path d="M1 2L3 1L5 2L7 1L9 2V9L7 10L5 9L3 10L1 9Z" fill="#e34135" />],
  ["Capture", <><circle cx="4" cy="4" r="3" fill="#8e4b87" /><path d="M5 5h4v4H5z" fill="#eee" stroke="#8e4b87" /></>],
  ["Graphics", <><path d="M0 1h10v9H0z" fill="#22331b" /><circle cx="5" cy="5.500" r="2.500" stroke="#76b900" strokeWidth="1.300" /></>],
  ["Network map", <><circle cx="5" cy="5" r="5" fill="#124f7e" /><path d="M2 3L6 2L8 6L4 7Z" fill="#8cc4e4" /><circle cx="8" cy="8" r="2" fill="#33a14b" /></>],
  ["Display", <><path d="M0 1h9v7H0z" fill="#e4edf3" stroke="#567" /><path d="M1 2h7v2H1z" fill="#4a9ad4" /><path d="M3 10L7 5" stroke="#d09022" strokeWidth="1.500" /></>],
  ["Chat", <><circle cx="5" cy="5" r="4.500" fill="#2a9fe2" /><path d="M7 3H4V5H6V7H3" stroke="#fff" /><circle cx="8" cy="8" r="2" fill="#3bb24a" /></>],
  ["Security", <><path d="M1 1H9V6L5 10L1 6Z" fill="#fff" stroke="#222" /><path d="M5 1V9M1 5H9" stroke="#222" /><circle cx="8" cy="8" r="2.500" fill="#dd2b20" /></>],
  ["Sync", <><circle cx="5" cy="5" r="5" fill="#1694e8" /><path d="M7 2.500L3 5L7 7.500Z" fill="#fff" /></>],
  ["Network", <><path d="M0 2H7V7H0ZM3 7V9M1 9.500H6M8 3V9" stroke="#222" /><path d="M7 1h3v3H7z" stroke="#222" /></>],
  ["Volume", <><path d="M0 4H2L5 1V9L2 6H0Z" stroke="#222" /><circle cx="8" cy="7" r="2.500" fill="#dd2b20" /></>],
];

export default function App() {
  return (
    <Shell>
      <GlobalStyle />
      <TitleBar>
        <Icon w={10} h={10}><circle cx="5" cy="5" r="5" fill="#0a3c6c" /><path d="M1 3Q5-1 9 3L7 4H3Z" fill="#8cc0e0" /><path d="M4 3.500L7 5L4 7Z" fill="#fff" /></Icon>
        <span>3DEXPERIENCE</span>
        <WindowButtons>
          <button aria-label="Minimize"><Icon w={8} h={8}><path d="M1 4.500H7" stroke="#fff" strokeWidth=".8" /></Icon></button>
          <button aria-label="Restore"><Icon w={8} h={8}><path d="M1 3H5.500V7H1ZM2.500 3V1.500H7V5.500H5.500" stroke="#fff" strokeWidth=".8" /></Icon></button>
          <button aria-label="Close"><Icon w={8} h={8}><path d="M1 1L7 7M7 1L1 7" stroke="#fff" strokeWidth=".8" /></Icon></button>
        </WindowButtons>
      </TitleBar>

      <Header>
        <Brand>
          <Icon w={19} h={18}>
            <path d="M7 1.500Q13 1 12.500 3Q12 5 7 7" stroke="#fff" strokeWidth="1.300" />
            <path d="M7 7Q12 7.500 10 10Q7 14 1 15.500Q4 13 6.500 9" stroke="#fff" strokeWidth="1.400" />
            <path d="M18.500 7.500Q13 6 13 8.500Q13 10 15.500 11Q18 13 15 14.500Q12 15.500 9.500 14.500" stroke="#fff" strokeWidth="1.500" />
          </Icon>
          <CompassSlot><Compass /></CompassSlot>
          <BrandText><b>3D</b>EXPERIENCE | <b>DELMIA</b></BrandText>
          <AppName>Robot Surface Simulation</AppName>
        </Brand>
        <HeaderRight>
          <SearchBox>
            <ScopeButton type="button">Physical Product <Icon w={5} h={3} box="0 0 6 4"><path d="M0 0H6L3 4Z" fill="#fff" /></Icon></ScopeButton>
            <input aria-label="Search" placeholder="In" />
            <button type="button" aria-label="Run search">
              <Icon w={14} h={11}><circle cx="5" cy="5" r="3.500" stroke="#333" strokeWidth="1.400" /><path d="M7 7L9 10" stroke="#333" strokeWidth="1.600" /><path d="M9 1h5v5H9z" fill="#333" /><path d="M10 2.500h3M10 4.500h3" stroke="#ccc" strokeWidth=".6" /></Icon>
            </button>
          </SearchBox>
          <TagButton aria-label="Tags"><Icon w={15} h={14}><path d="M1.500 1.500L7 1L14 8L10 13L1.500 6.500Z" stroke="#fff" strokeWidth="1.400" strokeLinejoin="round" /><circle cx="4.500" cy="4" r="1" fill="#fff" /></Icon></TagButton>
          <HeaderActions>
            <SpaceButton>Collab Space <Icon w={7} h={4}><path d="M1 1Q3.500 4 6 1" stroke="#fff" strokeWidth="1.300" /></Icon></SpaceButton>
            <button aria-label="Profile"><Icon w={20} h={16}><circle cx="7" cy="9" r="6" stroke="#fff" strokeWidth="1.200" /><circle cx="7" cy="7" r="2" fill="#fff" /><path d="M3.500 12Q7 7.500 10.500 12Q7 14.500 3.500 12Z" fill="#fff" /><circle cx="15" cy="5" r="4" fill="#b9b7c6" /><circle cx="15" cy="5" r="1.200" fill="#eee" /></Icon></button>
            <button aria-label="Add"><Icon w={12} h={12}><path d="M6 0V12M0 6H12" stroke="#fff" strokeWidth="1.800" /></Icon></button>
            <button aria-label="Share"><Icon w={16} h={13}><path d="M1.500 12Q2 5 9 4V1L14.500 6L9 10V7Q4 7 1.500 12Z" stroke="#fff" strokeWidth="1.300" strokeLinejoin="round" /></Icon></button>
            <button aria-label="Help"><Icon w={14} h={14}><circle cx="7" cy="7" r="6.200" stroke="#fff" strokeWidth="1.300" /><path d="M4.800 5.500Q5 3.500 7 3.500T9.200 5.500T7 8V9M7 10V11.500" stroke="#fff" strokeWidth="1.400" /></Icon></button>
          </HeaderActions>
        </HeaderRight>
      </Header>

      <TabStrip>
        <DocumentTab>Blasting Cell ---.000</DocumentTab>
        <AddTab aria-label="New tab">+</AddTab>
        <ExitFull aria-label="Leave immersive view"><Icon w={11} h={9}><path d="M1 5H5V9ZM6 0V4H10Z" fill="#174f7a" /><path d="M1 9L3.500 6.500M10 0L7.500 2.500" stroke="#174f7a" strokeWidth="1.300" /></Icon></ExitFull>
      </TabStrip>

      <Workspace>
        <CellScene />

        <LeftDock>
          <Gutter>
            {gutterTools.map((name, i) => <GutterButton key={name} aria-label={name} $active={i === 4}><Glyph name={name} /></GutterButton>)}
            <DockHandle aria-label="Show panel"><Icon w={6} h={9}><path d="M5 1L1.500 4.500L5 8" stroke="#777" /></Icon></DockHandle>
          </Gutter>
          <DockBody>
            <CollapseRow><button aria-label="Collapse"><Icon w={5} h={6}><path d="M4 1L1 3L4 5" stroke="#555" /></Icon></button></CollapseRow>
            <WindowBar><WindowTab>Behavior</WindowTab></WindowBar>
            <Dots><span /><span /><span /></Dots>
            <IconGrid>
              {panelTools.map((name, i) => <IconCell key={name} aria-label={name} $on={i === 5 || i === 8}><Glyph name={name} /></IconCell>)}
            </IconGrid>
            <Tree>
              <TreeGroup><Caret small /> Surface</TreeGroup>
              <TreeItem $inset={20}><Glyph name="surface" />BlastTrajectory.1</TreeItem>
              <TreeGroup><Caret small /> Device/Robot Tasks</TreeGroup>
              <TreeItem $inset={18}><Glyph name="curve" />BlastTrajectory.1(Motion Group.1.1)</TreeItem>
            </Tree>
            <HorizontalScroll>
              <Icon w={4} h={5}><path d="M3 0V5L0 2.500Z" fill="#666" /></Icon><span /><Icon w={4} h={5}><path d="M0 0V5L3 2.500Z" fill="#666" /></Icon>
            </HorizontalScroll>
          </DockBody>
        </LeftDock>

        <SideTools>
          <SideTool aria-label="Lock"><Icon w={5} h={12}><path d="M0 2Q4 3 4 6V9H0" stroke="#444" /></Icon></SideTool>
          <SideTool aria-label="Snapshot"><Icon w={5} h={12}><path d="M0 3H4V9H0" stroke="#444" /></Icon></SideTool>
          <SideTool aria-label="Search model"><Icon w={5} h={12}><path d="M0 3Q4 3 4 6T0 9" stroke="#aaa" /></Icon></SideTool>
        </SideTools>

        <Floating $right={243} $top={1} $width={173}>
          <WindowBar>
            <WindowTab>Color Legend</WindowTab>
            <WindowTool aria-label="Minimize legend"><Icon w={7} h={7}><path d="M0 6H7" stroke="#666" strokeWidth="1.200" /></Icon></WindowTool>
            <WindowTool aria-label="Close legend"><Icon w={7} h={7}><path d="M1 1L6 6M6 1L1 6" stroke="#555" strokeWidth="1.200" /></Icon></WindowTool>
          </WindowBar>
          <LegendBody>
            <LegendTable>
              <colgroup><col width="37" /><col width="38" /><col /></colgroup>
              <thead><tr><th>Min (%)</th><th>Max (%)</th><th>Color</th></tr></thead>
              <tbody>
                {legend.map(([min, max, color]) => <tr key={color}><td>{min}</td><td>{max}</td><ColorCell $color={color} /></tr>)}
              </tbody>
            </LegendTable>
          </LegendBody>
        </Floating>

        <Floating $right={20} $top={160} $width={220}>
          <WindowBar>
            <WindowTab>Simulation Options</WindowTab>
            <WindowTool aria-label="Options"><Icon w={8} h={8}><circle cx="4" cy="4" r="2.500" stroke="#666" strokeWidth="1.300" /><circle cx="4" cy="4" r="3.500" stroke="#666" strokeDasharray="1.200 1.500" /></Icon></WindowTool>
            <WindowTool aria-label="Minimize options"><Icon w={7} h={7}><path d="M0 6H7" stroke="#666" strokeWidth="1.200" /></Icon></WindowTool>
          </WindowBar>
          <SimBody>
            <SimForm>
              <ModeBar>{modes.map((m) => <ModeButton type="button" key={m} aria-label={m} $on={m === "paint"}><Glyph name={m} /></ModeButton>)}</ModeBar>
              <FieldRow $gap={6}>
                <label htmlFor="application">Application:</label>
                <SelectWrap><select id="application"><option>Blasting</option></select><Caret /></SelectWrap>
              </FieldRow>
              <FieldRow $gap={6}>
                <label htmlFor="display">Display:</label>
                <SelectWrap $w={50}><select id="display"><option>Threshol</option></select><Caret /></SelectWrap>
                <label htmlFor="result">Result:</label>
                <SelectWrap $w={50}><select id="result"><option>Exposur</option></select><Caret /></SelectWrap>
                <SelectWrap><select aria-label="Unit"><option>%</option></select><Caret /></SelectWrap>
              </FieldRow>
              <FieldRow>
                <CheckLabel><input type="checkbox" />Masking</CheckLabel>
                <label htmlFor="tolerance">Tolerance:</label>
                <SpinField $off><input id="tolerance" defaultValue="1.000mm" disabled /><Spin /></SpinField>
                <SquareButton type="button" aria-label="Erase"><Glyph name="eraser" /></SquareButton>
              </FieldRow>
              <ThresholdRow>
                <Threshold>
                  <legend>Threshold Parameters</legend>
                  <LimitRow>
                    <label htmlFor="upper">Upper Limit:</label>
                    <SpinField><input id="upper" defaultValue="5.00%" /><Spin /></SpinField>
                    <Swatch type="button" aria-label="Upper colour" $color="#ff1e00" />
                  </LimitRow>
                  <LimitRow>
                    <label htmlFor="lower">Lower Limit:</label>
                    <SpinField><input id="lower" defaultValue="0.00%" /><Spin /></SpinField>
                    <Swatch type="button" aria-label="Lower colour" $color="#000cff" />
                  </LimitRow>
                  <LimitRow>
                    <label htmlFor="intervals">Intervals:</label>
                    <SpinField><input id="intervals" defaultValue="15" /><Spin /></SpinField>
                  </LimitRow>
                  <GenerateRow>
                    <Generate type="button">Generate Legend</Generate>
                    <SquareButton type="button" $blue aria-label="Show legend"><Glyph name="eye" /></SquareButton>
                  </GenerateRow>
                </Threshold>
                <SquareButton type="button" aria-label="Surface info"><Glyph name="paintInfo" /></SquareButton>
              </ThresholdRow>
            </SimForm>
            <VerticalScroll><Caret up small /><span /><Caret small /></VerticalScroll>
          </SimBody>
        </Floating>

        <ActionBar>
          <ActionTabs>{barTabs.map((t) => <ActionTab key={t} $on={t === "Standard" || t === "Analysis & Output"}>{t}</ActionTab>)}</ActionTabs>
          <ActionBody>
            <Expand aria-label="Collapse bar"><Icon w={7} h={4}><path d="M1 .5L3.500 3L6 .5" stroke="#666" /></Icon></Expand>
            <Commands>
              {commands.map((c, i) => (
                <React.Fragment key={i}>
                  <Command $off={c.off} $wide={c.wide}><BigGlyph name={c.icon} /><span>{c.lines.map((l) => <div key={l}>{l}</div>)}</span></Command>
                  {c.more && <More aria-label={`More ${c.lines[0]}`}><Icon w={4} h={3} box="0 0 6 4"><path d="M0 0H6L3 4Z" fill="#777" /></Icon></More>}
                  {c.rule && <Rule />}
                </React.Fragment>
              ))}
            </Commands>
          </ActionBody>
        </ActionBar>
        <PointerMark viewBox="0 0 6 11" width="6" height="11" aria-hidden="true"><path d="M1 .5H2.500L3 1L3.500 .5H5M3 1V10M1 10.500H2.500L3 10L3.500 10.500H5" stroke="#222" strokeWidth=".9" fill="none" /></PointerMark>
      </Workspace>

      <StatusBar>
        <span>Select an object or a command</span>
        <input aria-label="Command input" />
        <StatusTool aria-label="History"><Icon w={8} h={8}><path d="M1 1H6V4H1ZM5 6H7" stroke="#aaa" /></Icon></StatusTool>
        <StatusTool aria-label="Messages"><Icon w={9} h={9}><path d="M1 1H8V6H6L5 8L4 6H1Z" fill="#555" /><path d="M4.500 2V5" stroke="#fff" /></Icon></StatusTool>
      </StatusBar>

      <Taskbar>
        {tasks.map((t, i) => <TaskButton key={i} $w={t.w} $state={t.state} aria-label={t.label ? undefined : t.kind}><TaskGlyph kind={t.kind} />{t.label}</TaskButton>)}
        <Tray>
          {trayIcons.map(([name, art]) => <TrayIcon key={name} aria-label={name}><Icon w={10} h={11}>{art}</Icon></TrayIcon>)}
          <Clock>2:55 PM<br />5/18/2021</Clock>
          <Notice aria-label="Notifications"><Icon w={12} h={12}><path d="M1 1H11V9H8L6 11V9H1Z" stroke="#222" /></Icon></Notice>
        </Tray>
      </Taskbar>
    </Shell>
  );
}
